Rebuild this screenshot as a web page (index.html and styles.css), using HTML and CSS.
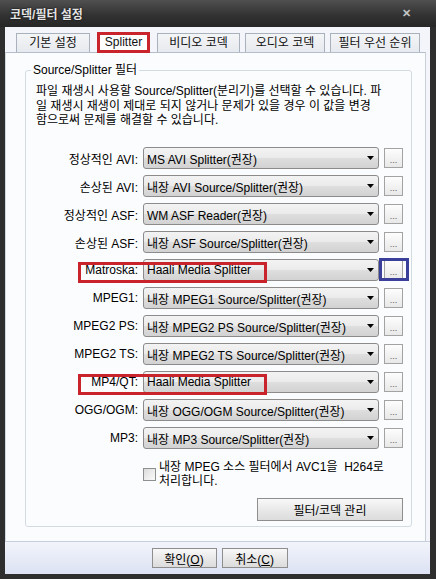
FILE: index.html
```html
<!DOCTYPE html>
<html lang="ko">
<head>
  <meta charset="UTF-8" />
  <title>코덱/필터 설정</title>
  <link rel="stylesheet" href="styles.css">
</head>
<body>

  <div class="window">
    <!-- Title bar -->
    <div class="titlebar">
      <span class="title">코덱/필터 설정</span>
      <span class="close">✕</span>
    </div>

    <div class="frame">
      <!-- Tabs -->
      <div class="tabs">
        <div class="tab t1">기본 설정</div>
        <div class="tab active">Splitter</div>
        <div class="tab t3">비디오 코덱</div>
        <div class="tab t4">오디오 코덱</div>
        <div class="tab t5">필터 우선 순위</div>
      </div>

      <!-- Tab page -->
      <div class="page">
        <fieldset class="group">
          <legend>Source/Splitter 필터</legend>

          <p class="desc">파일 재생시 사용할 Source/Splitter(분리기)를 선택할 수 있습니다. 파<br>일 재생시 재생이 제대로 되지 않거나 문제가 있을 경우 이 값을 변경<br>함으로써 문제를 해결할 수 있습니다.</p>

          <div class="rows">
            <div class="row">
              <span class="label">정상적인 AVI:</span>
              <div class="combo"><span>MS AVI Splitter(권장)</span><svg width="7" height="4" viewBox="0 0 7 4"><path d="M0 0h7L3.5 4z" fill="#000"/></svg></div>
              <button class="more">...</button>
            </div>
            <div class="row">
              <span class="label">손상된 AVI:</span>
              <div class="combo"><span>내장 AVI Source/Splitter(권장)</span><svg width="7" height="4" viewBox="0 0 7 4"><path d="M0 0h7L3.5 4z" fill="#000"/></svg></div>
              <button class="more">...</button>
            </div>
            <div class="row">
              <span class="label">정상적인 ASF:</span>
              <div class="combo"><span>WM ASF Reader(권장)</span><svg width="7" height="4" viewBox="0 0 7 4"><path d="M0 0h7L3.5 4z" fill="#000"/></svg></div>
              <button class="more">...</button>
            </div>
            <div class="row">
              <span class="label">손상된 ASF:</span>
              <div class="combo"><span>내장 ASF Source/Splitter(권장)</span><svg width="7" height="4" viewBox="0 0 7 4"><path d="M0 0h7L3.5 4z" fill="#000"/></svg></div>
              <button class="more">...</button>
            </div>
            <div class="row">
              <span class="label">Matroska:</span>
              <div class="combo"><span>Haali Media Splitter</span><svg width="7" height="4" viewBox="0 0 7 4"><path d="M0 0h7L3.5 4z" fill="#000"/></svg></div>
              <button class="more">...</button>
              <span class="mark red"></span>
              <span class="mark blue"></span>
            </div>
            <div class="row">
              <span class="label">MPEG1:</span>
              <div class="combo"><span>내장 MPEG1 Source/Splitter(권장)</span><svg width="7" height="4" viewBox="0 0 7 4"><path d="M0 0h7L3.5 4z" fill="#000"/></svg></div>
              <button class="more">...</button>
            </div>
            <div class="row">
              <span class="label">MPEG2 PS:</span>
              <div class="combo"><span>내장 MPEG2 PS Source/Splitter(권장)</span><svg width="7" height="4" viewBox="0 0 7 4"><path d="M0 0h7L3.5 4z" fill="#000"/></svg></div>
              <button class="more">...</button>
            </div>
            <div class="row">
              <span class="label">MPEG2 TS:</span>
              <div class="combo"><span>내장 MPEG2 TS Source/Splitter(권장)</span><svg width="7" height="4" viewBox="0 0 7 4"><path d="M0 0h7L3.5 4z" fill="#000"/></svg></div>
              <button class="more">...</button>
            </div>
            <div class="row">
              <span class="label">MP4/QT:</span>
              <div class="combo"><span>Haali Media Splitter</span><svg width="7" height="4" viewBox="0 0 7 4"><path d="M0 0h7L3.5 4z" fill="#000"/></svg></div>
              <button class="more">...</button>
              <span class="mark red"></span>
            </div>
            <div class="row">
              <span class="label">OGG/OGM:</span>
              <div class="combo"><span>내장 OGG/OGM Source/Splitter(권장)</span><svg width="7" height="4" viewBox="0 0 7 4"><path d="M0 0h7L3.5 4z" fill="#000"/></svg></div>
              <button class="more">...</button>
            </div>
            <div class="row">
              <span class="label">MP3:</span>
              <div class="combo"><span>내장 MP3 Source/Splitter(권장)</span><svg width="7" height="4" viewBox="0 0 7 4"><path d="M0 0h7L3.5 4z" fill="#000"/></svg></div>
              <button class="more">...</button>
            </div>
          </div>

          <label class="check">
            <span class="box"></span>
            <span>내장 MPEG 소스 필터에서 AVC1을&nbsp; H264로<br>처리합니다.</span>
          </label>

          <div class="manage-wrap">
            <button class="btn manage">필터/코덱 관리</button>
          </div>
        </fieldset>
      </div>

      <!-- Dialog buttons -->
      <div class="footer">
        <button class="btn ok">확인(<u>O</u>)</button>
        <button class="btn cancel">취소(<u>C</u>)</button>
      </div>
    </div>
  </div>

</body>
</html>
```

FILE: styles.css
```css
body {
  margin: 0;
  padding: 0;
  background: #2c2c2c;
  font-family: "Liberation Sans", "Noto Sans CJK KR", sans-serif;
  font-size: 12px;
  color: #000;
}

.window {
  width: 436px;
  height: 579px;
  display: flex;
  flex-direction: column;
  background: #2e2e2e;
}

.titlebar {
  height: 27px;
  display: flex;
  align-items: center;
  justify-content: space-between;
  padding: 0 25px 0 10px;
  background: linear-gradient(#505050, #333333 55%, #262626);
}

.title {
  color: #e4e4e4;
  font-weight: bold;
  font-size: 12px;
  text-shadow: 0 0 2px #000;
}

.close {
  color: #c4c4c4;
  font-size: 11px;
  font-weight: bold;
}

.frame {
  flex: 1;
  margin: 0 6px 5px 5px;
  display: flex;
  flex-direction: column;
  background: #f3f5fb;
}

/* Tabs */
.tabs {
  height: 25px;
  display: flex;
  align-items: flex-end;
  padding-left: 11px;
  gap: 5px;
}

.tab {
  height: 19px;
  line-height: 18px;
  text-align: center;
  box-sizing: border-box;
  border: 1px solid #a9b1bc;
  border-bottom: none;
  background: linear-gradient(#f4f5f7, #e6e9ee);
  color: #111;
}

.t1 { width: 74px; }
.t3 { width: 83px; }
.t4 { width: 80px; }
.t5 { width: 90px; }

.tab.active {
  width: 53px;
  height: 21px;
  margin: 0 2px -1px;
  line-height: 15px;
  border: 3px solid #c9232b;
  background: #fdfdfe;
  position: relative;
  z-index: 1;
}

/* Tab page */
.page {
  flex: 1;
  margin-right: 4px;
  background: #fbfcfe;
  border-top: 1px solid #b4bdca;
  border-left: 1px solid #d3d9e3;
  border-right: 1px solid #c8cfda;
}

.group {
  margin: 10px 13px 0 19px;
  padding: 7px 8px 5px 10px;
  border: 1px solid #d3dbe2;
  border-radius: 3px;
  min-width: 0;
}

.group legend {
  margin-left: -5px;
  padding: 0 2px;
  line-height: 14px;
}

.desc {
  margin: 0;
  line-height: 14.5px;
  white-space: nowrap;
}

.rows {
  margin-top: 19.5px;
  display: flex;
  flex-direction: column;
  gap: 6px;
}

.row {
  position: relative;
  height: 22px;
  display: flex;
  align-items: center;
}

.label {
  width: 102px;
  text-align: right;
  white-space: nowrap;
}

.combo {
  width: 236px;
  height: 22px;
  margin-left: 5px;
  box-sizing: border-box;
  padding: 0 4px 0 3px;
  display: flex;
  align-items: center;
  justify-content: space-between;
  border: 1px solid #8b8b8b;
  border-radius: 3px;
  background: linear-gradient(#f3f3f3, #ebebeb 48%, #dedede 52%, #d2d2d2);
  white-space: nowrap;
}

.more {
  width: 19px;
  height: 20px;
  margin-left: 5px;
  padding: 4px 0 0;
  box-sizing: border-box;
  border: 1px solid #a3a3a3;
  background: linear-gradient(#fdfdfd, #e8e8e8);
  font-family: "Liberation Sans", sans-serif;
  font-size: 9px;
  color: #555;
  line-height: 10px;
}

/* annotation frames drawn over the screenshot */
.mark {
  position: absolute;
  box-sizing: border-box;
  border: 3px solid #c9232b;
  pointer-events: none;
}

.mark.red {
  left: 42px;
  top: 3px;
  width: 189px;
  height: 21px;
}

.mark.blue {
  left: 343px;
  top: -1px;
  width: 30px;
  height: 23px;
  border-color: #3a3f9a;
}

.check {
  margin-top: 11px;
  padding-left: 107px;
  display: flex;
  align-items: center;
  line-height: 14px;
  white-space: nowrap;
}

.check .box {
  width: 13px;
  height: 13px;
  margin-right: 3px;
  box-sizing: border-box;
  border: 1px solid #8e8f8f;
  background: linear-gradient(135deg, #dcdcdc, #fbfbfb);
  flex-shrink: 0;
}

.manage-wrap {
  margin-top: 10px;
  display: flex;
  justify-content: flex-end;
}

.btn {
  box-sizing: border-box;
  padding: 0;
  border: 1px solid #8e8e8e;
  background: linear-gradient(#f8f8f8, #e9e9e9 50%, #dcdcdc);
  font-family: "Liberation Sans", "Noto Sans CJK KR", sans-serif;
  font-size: 12px;
  color: #000;
}

.manage {
  width: 146px;
  height: 23px;
}

/* Footer */
.footer {
  height: 33px;
  box-sizing: border-box;
  border-top: 1px solid #c7cedd;
  background: linear-gradient(#f2f4fb, #dce2f4);
  display: flex;
  align-items: center;
  justify-content: center;
  gap: 5px;
  padding-left: 4px;
}

.ok { width: 65px; height: 20px; }
.cancel { width: 66px; height: 20px; }
```
